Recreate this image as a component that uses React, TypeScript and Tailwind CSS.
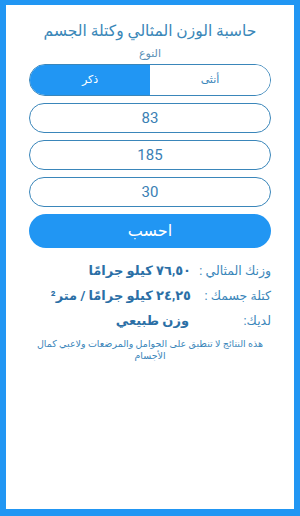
import { useState } from "react";

const FONT = { fontFamily: "Roboto, 'DejaVu Sans', 'Noto Sans', sans-serif" };

function ResultRow({ label, value, className = "" }: { label: string; value: string; className?: string }) {
  return (
    <div className="flex h-[18px] items-center">
      <div className="w-[80px] shrink-0 whitespace-nowrap text-[12.5px] text-[#3a86ba]">{label}</div>
      <div className={`whitespace-nowrap text-[13px] font-bold text-[#2b6fa6] ${className}`}>{value}</div>
    </div>
  );
}

export default function App() {
  const [gender, setGender] = useState<"m" | "f">("m");
  const [weight, setWeight] = useState("83");
  const [height, setHeight] = useState("185");
  const [age, setAge] = useState("30");

  const inputCls =
    "h-[30px] w-full rounded-full border-[1.5px] border-[#3a86ba] bg-white text-center text-[15px] text-[#3a80b4] outline-none";

  return (
    <div dir="rtl" style={FONT} className="h-[516px] w-[300px] bg-[#2196f3] pt-[5px] pb-[7px] px-[6px]">
      <div className="flex h-full flex-col bg-white">
        <h1 className="mt-[14px] text-center text-[15.5px] leading-[24px] text-[#3a87b8]">
          حاسبة الوزن المثالي وكتلة الجسم
        </h1>
        <div className="mx-auto flex w-[242px] flex-col">
          <div className="mt-[4px] text-center text-[11px] leading-[14px] text-[#5a8fb5]">النوع</div>
          <div className="mt-[3px] flex h-[32px] overflow-hidden rounded-full border-[1.5px] border-[#3a86ba]">
            <button
              onClick={() => setGender("f")}
              className={`flex-1 text-[11px] ${gender === "f" ? "bg-[#2196f3] text-white" : "bg-white text-[#3a86ba]"}`}
            >
              أنثى
            </button>
            <button
              onClick={() => setGender("m")}
              className={`flex-1 text-[11px] ${gender === "m" ? "bg-[#2196f3] text-white" : "bg-white text-[#3a86ba]"}`}
            >
              ذكر
            </button>
          </div>
          <div className="mt-[7px] flex flex-col gap-[7px]" dir="ltr">
            <input className={inputCls} value={weight} onChange={(e) => setWeight(e.target.value)} />
            <input className={inputCls} value={height} onChange={(e) => setHeight(e.target.value)} />
            <input className={inputCls} value={age} onChange={(e) => setAge(e.target.value)} />
          </div>
          <button className="mt-[7px] h-[34px] w-full rounded-full bg-[#2196f3] text-[16px] text-white">
            احسب
          </button>
          <div className="mt-[14px] flex flex-col gap-[7px]">
            <ResultRow label="وزنك المثالي :" value="٧٦,٥٠ كيلو جرامًا" />
            <ResultRow label="كتلة جسمك :" value="٢٤,٢٥ كيلو جرامًا / متر²" />
            <ResultRow label="لديك:" value="وزن طبيعي" className="pr-[2px]" />
          </div>
        </div>
        <p className="mx-auto mt-[8px] w-[252px] text-center text-[9.5px] leading-[12px] text-[#3a86ba]">
          هذه النتائج لا تنطبق على الحوامل والمرضعات ولاعبي كمال الأجسام
        </p>
      </div>
    </div>
  );
}
